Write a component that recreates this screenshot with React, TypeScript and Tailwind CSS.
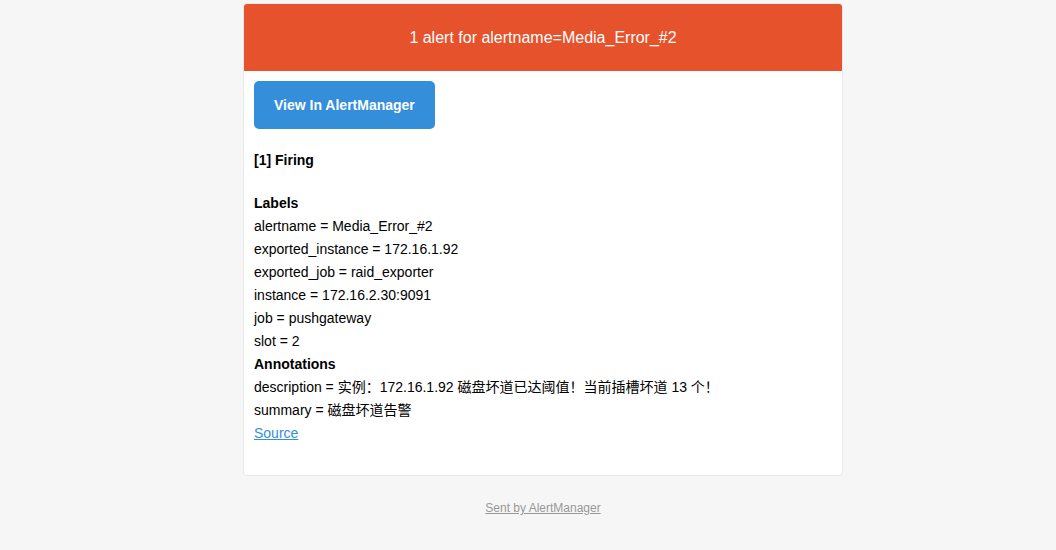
import React from "react";

const labels = [
  "alertname = Media_Error_#2",
  "exported_instance = 172.16.1.92",
  "exported_job = raid_exporter",
  "instance = 172.16.2.30:9091",
  "job = pushgateway",
  "slot = 2",
];

export default function App() {
  return (
    <div
      className="min-h-[550px] w-full bg-[#f6f6f6] text-[14px] text-black"
      style={{ fontFamily: '"Liberation Sans", Arial, "Noto Sans CJK SC", sans-serif' }}
    >
      <div className="flex flex-col pl-[243px] pt-[3px]">
        <div className="w-[600px] rounded-[3px] border border-[#e9e9e9] bg-white">
          <div className="flex h-[67px] items-center justify-center rounded-t-[3px] bg-[#e6522c] text-[16px] text-white">
            1 alert for alertname=Media_Error_#2
          </div>
          <div className="flex flex-col items-start p-[10px]">
            <a
              href="#"
              className="rounded-[5px] bg-[#348eda] px-[20px] py-[10px] text-[14px] font-bold leading-[28px] text-white"
            >
              View In AlertManager
            </a>
            <div className="pt-[20px] font-bold leading-[23px]">[1] Firing</div>
            <div className="flex flex-col pt-[20px] pb-[20px] leading-[23px]">
              <div className="font-bold">Labels</div>
              {labels.map((l) => (
                <div key={l}>{l}</div>
              ))}
              <div className="font-bold">Annotations</div>
              <div>description = 实例：172.16.1.92 磁盘坏道已达阈值！当前插槽坏道 13 个！</div>
              <div>summary = 磁盘坏道告警</div>
              <a href="#" className="text-[#348eda] underline">
                Source
              </a>
            </div>
          </div>
        </div>
        <div className="flex w-[600px] justify-center pt-[23px]">
          <a href="#" className="text-[12px] leading-[18px] text-[#999] underline">
            Sent by AlertManager
          </a>
        </div>
      </div>
    </div>
  );
}
